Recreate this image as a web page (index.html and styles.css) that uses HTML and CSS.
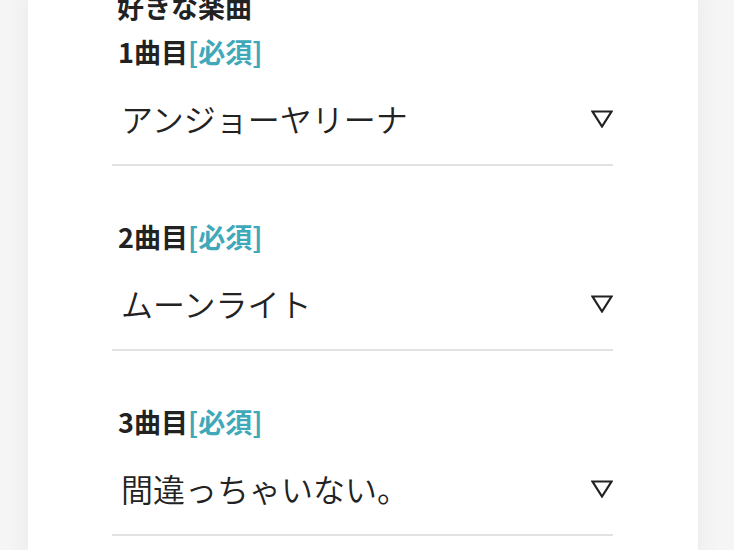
FILE: index.html
```html
<!DOCTYPE html>
<html lang="ja">
<head>
    <meta charset="UTF-8">
    <meta name="viewport" content="width=device-width, initial-scale=1.0">
    <title>好きな楽曲</title>
    <link rel="stylesheet" href="styles.css">
</head>
<body>
    <div class="card">
        <h2 class="title">好きな楽曲</h2>

        <div class="field">
            <label class="label">1曲目<span class="required">[必須]</span></label>
            <div class="select">
                <span class="value">アンジョーヤリーナ</span>
                <svg class="arrow" width="22" height="18" viewBox="0 0 22 18"><polygon points="1.5,1.5 20.5,1.5 11,16.5"/></svg>
            </div>
        </div>

        <div class="field">
            <label class="label">2曲目<span class="required">[必須]</span></label>
            <div class="select">
                <span class="value">ムーンライト</span>
                <svg class="arrow" width="22" height="18" viewBox="0 0 22 18"><polygon points="1.5,1.5 20.5,1.5 11,16.5"/></svg>
            </div>
        </div>

        <div class="field">
            <label class="label">3曲目<span class="required">[必須]</span></label>
            <div class="select">
                <span class="value">間違っちゃいない。</span>
                <svg class="arrow" width="22" height="18" viewBox="0 0 22 18"><polygon points="1.5,1.5 20.5,1.5 11,16.5"/></svg>
            </div>
        </div>
    </div>
</body>
</html>
```

FILE: styles.css
```css
body {
    margin: 0;
    background-color: #f5f5f5;
    font-family: "Noto Sans CJK JP", "Noto Sans", sans-serif;
    color: #222;
}
.card {
    width: 670px;
    margin-left: 28px;
    padding: 0 85px 40px 84px;
    box-sizing: border-box;
    background-color: #fff;
    box-shadow: 0 0 24px rgba(0, 0, 0, 0.05);
    min-height: 100vh;
}
.title {
    margin: -12px 0 0 5px;
    font-size: 27px;
    line-height: 38px;
    font-weight: bold;
}
.field {
    margin-top: 9px;
}
.field + .field {
    margin-top: 54px;
}
.label {
    display: block;
    margin-left: 6px;
    font-size: 27px;
    line-height: 34px;
    font-weight: bold;
}
.required {
    color: #3fa9b9;
}
.select {
    display: flex;
    align-items: center;
    justify-content: space-between;
    margin-top: 17px;
    padding: 10px 0 24px 9px;
    border-bottom: 2px solid #e2e2e2;
}
.value {
    font-size: 32px;
    line-height: 44px;
    font-weight: 350;
}
.arrow {
    fill: none;
    stroke: #222;
    stroke-width: 2.2;
    margin-top: 2px;
}
```
